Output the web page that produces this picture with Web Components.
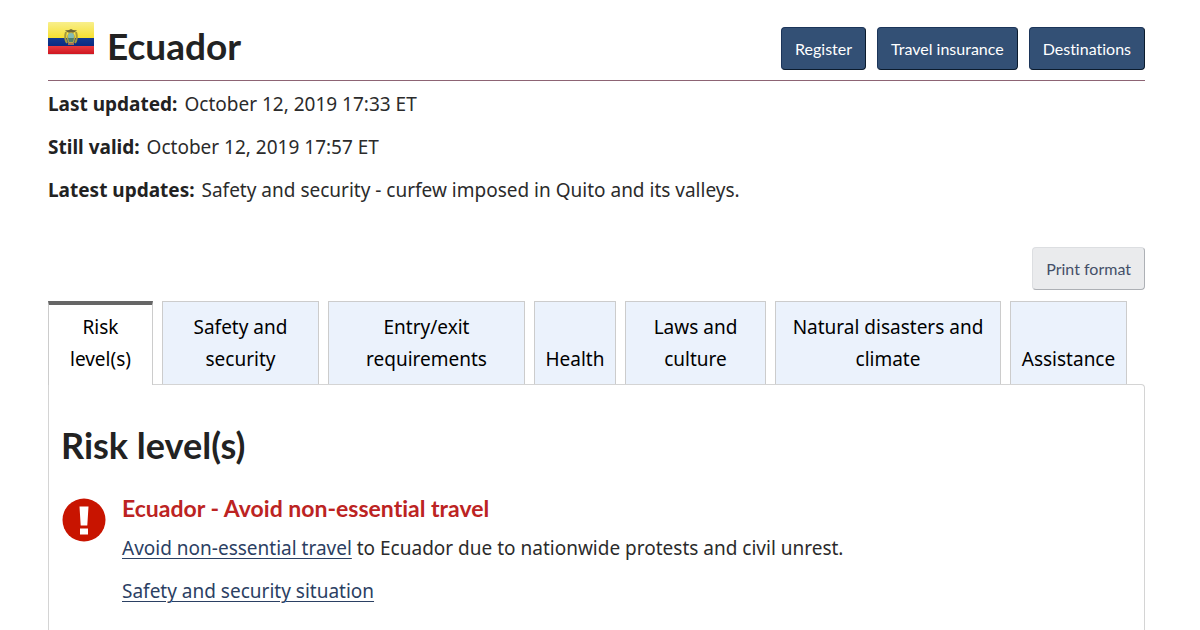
<!DOCTYPE html>
<html lang="en">
<head>
<meta charset="utf-8">
<title>Ecuador - Travel advice</title>
<meta name="viewport" content="width=device-width, initial-scale=1">
<style>
  body { margin: 0; background: #fff; color: #2b2b2b; font: 19px/32px "Noto Sans", sans-serif; font-variant-ligatures: none; }
</style>
</head>
<body>
<travel-page></travel-page>

<template id="page-template">
  <style>
    :host { display: block; padding: 20px 55px 0 48px; }
    dl { margin: 7px 0 0; display: grid; gap: 11px; }
    dl div { display: flex; gap: 7px; }
    dt { font-weight: 700; color: #222; }
    dd { margin: 0; }
    .tools { display: flex; justify-content: flex-end; margin-top: 41px; }
    tab-strip { margin-top: 11px; }
  </style>
  <country-header>
    <country-flag slot="flag"></country-flag>
    Ecuador
    <action-button slot="actions">Register</action-button>
    <action-button slot="actions">Travel insurance</action-button>
    <action-button slot="actions">Destinations</action-button>
  </country-header>
  <dl>
    <div><dt>Last updated:</dt><dd>October 12, 2019 17:33 ET</dd></div>
    <div><dt>Still valid:</dt><dd>October 12, 2019 17:57 ET</dd></div>
    <div><dt>Latest updates:</dt><dd>Safety and security - curfew imposed in Quito and its valleys.</dd></div>
  </dl>
  <div class="tools"><action-button variant="light">Print format</action-button></div>
  <tab-strip></tab-strip>
  <risk-panel></risk-panel>
</template>

<template id="header-template">
  <style>
    :host { display: flex; justify-content: space-between; align-items: flex-start; height: 60px; border-bottom: 1px solid #8d6474; }
    .name { display: flex; gap: 13px; }
    h1 { margin: 4px 0 0; font-family: Lato, sans-serif; font-weight: 700; font-size: 37px; line-height: 44px; color: #222; }
    nav { display: flex; gap: 11px; margin-top: 7px; }
  </style>
  <div class="name"><slot name="flag"></slot><h1><slot></slot></h1></div>
  <nav aria-label="Travel"><slot name="actions"></slot></nav>
</template>

<template id="flag-template">
  <style>
    :host { display: block; width: 46px; height: 36px; }
    svg { display: block; }
  </style>
  <svg width="46" height="36" viewBox="0 0 46 36" role="img" aria-label="Flag of Ecuador">
    <defs>
      <linearGradient id="y" x2="0" y2="1"><stop stop-color="#f8ef8c"/><stop offset="1" stop-color="#f7df2a"/></linearGradient>
      <linearGradient id="b" x2="0" y2="1"><stop stop-color="#123a91"/><stop offset="1" stop-color="#08297f"/></linearGradient>
      <linearGradient id="r" x2="0" y2="1"><stop stop-color="#e83b40"/><stop offset="1" stop-color="#cf1620"/></linearGradient>
    </defs>
    <rect y="3" width="46" height="32" rx="1" fill="#ddd"/>
    <rect y="2" width="46" height="17" rx="1" fill="url(#y)"/>
    <rect y="18" width="46" height="9" fill="url(#b)"/>
    <rect y="26" width="46" height="8" fill="url(#r)"/>
    <path d="M18 12q-2 6 1 11M28 12q2 6-1 11" fill="none" stroke="#a59a3c" stroke-width="2"/>
    <path d="M17 10q3 1 6-1 3 2 6 1-2 3-6 3t-6-3z" fill="#6c6638"/>
    <ellipse cx="23" cy="18" rx="4" ry="6" fill="#b9a646"/>
    <ellipse cx="23" cy="16" rx="3" ry="3" fill="#83bcb4"/>
    <path d="M20 18h6l-1 4h-4z" fill="#4e806a"/>
    <path d="M20 24h6" stroke="#a66f50" stroke-width="2"/>
  </svg>
</template>

<template id="button-template">
  <style>
    :host { display: block; }
    button { display: block; box-sizing: border-box; height: 43px; margin: 0; padding: 0 13px; border: 1px solid #1c355a; border-right-color: #0b1b2d; border-bottom-color: #0b1b2d; border-radius: 4px; background: #335075; color: #fff; font-family: Lato, sans-serif; font-size: 16px; line-height: 24px; font-variant-ligatures: none; cursor: pointer; }
    :host([variant="light"]) button { background: #eaebed; border-color: #dcdee1; border-right-color: #adb0b5; border-bottom-color: #adb0b5; color: #444f68; }
  </style>
  <button type="button"><slot></slot></button>
</template>

<template id="tabs-template">
  <style>
    :host { display: block; margin-right: 18px; }
    div { display: grid; grid-template-columns: 105fr 157fr 197fr 82fr 141fr 226fr 117fr; gap: 9px; }
    button { display: flex; align-items: flex-end; justify-content: center; min-width: 0; height: 83px; margin: 0; padding: 0 0 9px; border: 1px solid #ccc; border-bottom: 0; background: #ebf2fc; color: #000; font: inherit; text-align: center; cursor: pointer; }
    button[aria-selected="true"] { position: relative; height: 84px; margin-bottom: -1px; padding-bottom: 10px; border-top: 4px solid #666; background: #fff; }
  </style>
  <div role="tablist">
    <button role="tab" aria-selected="true">Risk<br>level(s)</button>
    <button role="tab" aria-selected="false">Safety and<br>security</button>
    <button role="tab" aria-selected="false">Entry/exit<br>requirements</button>
    <button role="tab" aria-selected="false">Health</button>
    <button role="tab" aria-selected="false">Laws and<br>culture</button>
    <button role="tab" aria-selected="false">Natural disasters and<br>climate</button>
    <button role="tab" aria-selected="false">Assistance</button>
  </div>
</template>

<template id="panel-template">
  <style>
    :host { display: block; padding: 38px 12px 24px; border: 1px solid #d4d4d4; border-bottom: 0; border-radius: 0 4px 0 0; }
    h2 { margin: 0; font-family: Lato, sans-serif; font-weight: 700; font-size: 36px; line-height: 44px; color: #222; }
    section { display: flex; gap: 16px; margin: 25px 0 0 1px; }
    svg { flex: none; margin-top: 6px; }
    h3 { margin: 0; font-family: Lato, sans-serif; font-weight: 700; font-size: 23px; line-height: 32px; color: #bc2322; }
    p { margin: 0 0 11px; }
    h3 + p { margin-top: 8px; }
    a { color: #2b4063; text-underline-offset: 3px; text-decoration-thickness: 1px; }
  </style>
  <h2>Risk level(s)</h2>
  <section>
    <svg width="44" height="44" viewBox="0 0 44 44" aria-hidden="true">
      <circle cx="22" cy="22" r="21.5" fill="#c81400"/>
      <path d="M17.5 8.500h9l-1.200 19h-6.600zM18 30.500h8v6h-8z" fill="#fff"/>
    </svg>
    <div>
      <h3>Ecuador - Avoid non-essential travel</h3>
      <p><a href="#advisory">Avoid non-essential travel</a> to Ecuador due to nationwide protests and civil unrest.</p>
      <p><a href="#security">Safety and security situation</a></p>
    </div>
  </section>
</template>

<script>
  const define = (name, templateId) => customElements.define(name, class extends HTMLElement {
    constructor() {
      super();
      this.attachShadow({ mode: "open" })
        .append(document.getElementById(templateId).content.cloneNode(true));
    }
  });
  define("country-flag", "flag-template");
  define("action-button", "button-template");
  define("country-header", "header-template");
  define("tab-strip", "tabs-template");
  define("risk-panel", "panel-template");
  define("travel-page", "page-template");
</script>
</body>
</html>
